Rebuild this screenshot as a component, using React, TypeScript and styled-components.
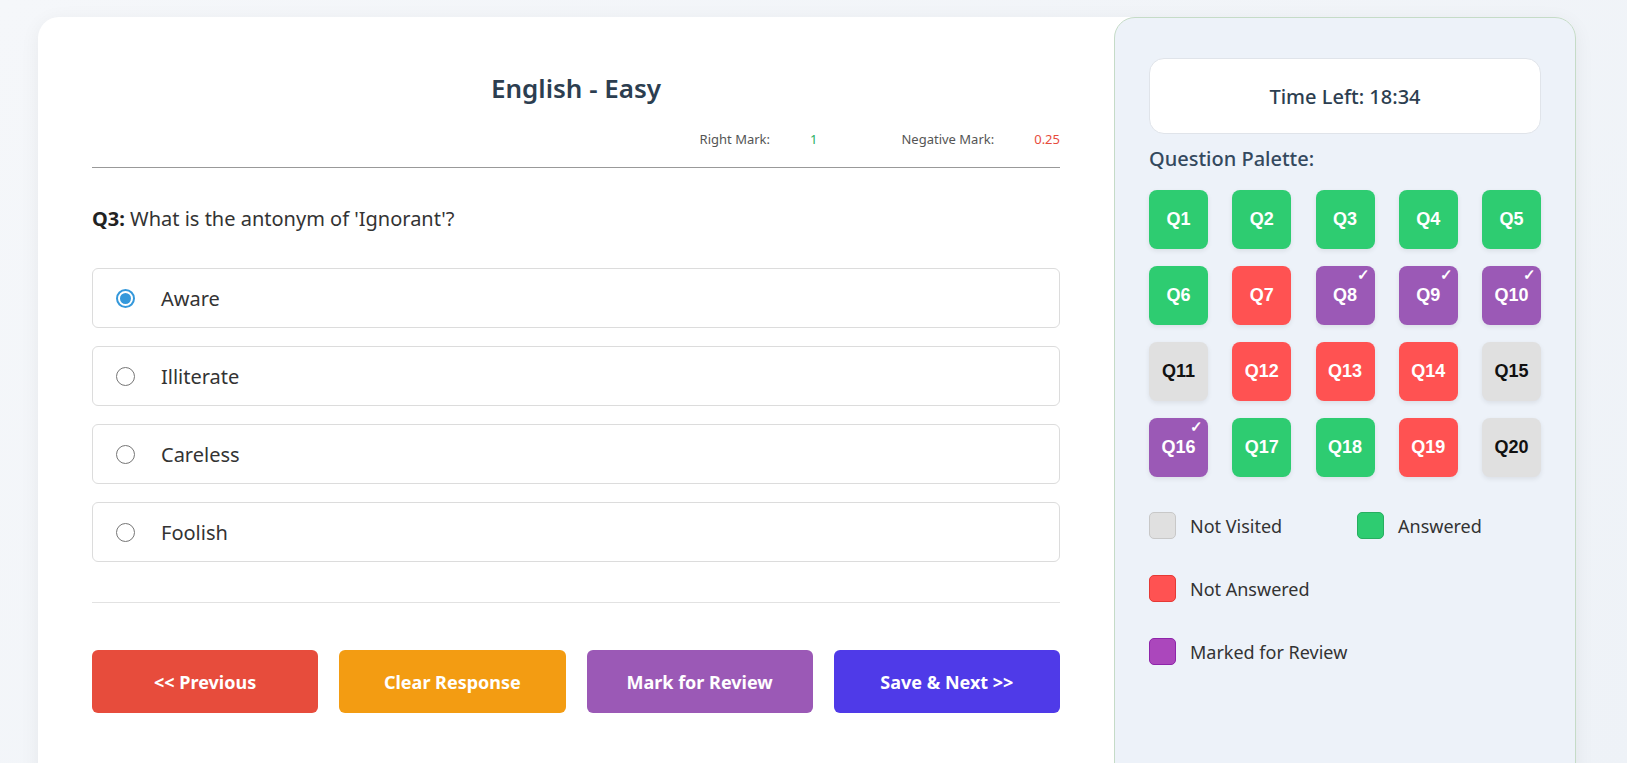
import React from "react";
import styled, { createGlobalStyle } from "styled-components";

const Global = createGlobalStyle`
  html, body { margin: 0; padding: 0; }
  body {
    background: linear-gradient(135deg, #f5f7fa 0%, #eef2f7 100%);
    font-family: "Noto Sans", "Open Sans", sans-serif;
    min-height: 763px;
  }
`;

const Page = styled.div`
  padding: 17px 0 0 38px;
`;

const Card = styled.div`
  display: flex;
  background: #fff;
  border-radius: 21px;
  box-shadow: 0 4px 20px rgba(0,0,0,0.06);
  height: 774px;
  width: 1538px;
  box-sizing: border-box;
`;

const Main = styled.div`
  flex: 1;
  padding: 50px 54px 0 54px;
  display: flex;
  flex-direction: column;
`;

const Title = styled.h2`
  margin: 0;
  text-align: center;
  font-size: 26px;
  font-weight: 600;
  color: #2c3e50;
  line-height: 42px;
`;

const Marks = styled.div`
  display: flex;
  justify-content: flex-end;
  font-size: 13px;
  color: #555;
  margin-top: 19px;
  height: 21px;
  align-items: center;
`;

const MarkLabel = styled.span`
  margin-left: 84px;
`;

const MarkValue = styled.span<{ $c: string }>`
  color: ${p => p.$c};
  margin-left: 40px;
`;

const Rule = styled.hr<{ $light?: boolean }>`
  border: none;
  border-top: ${p => (p.$light ? "1px solid #e2e2e2" : "1.5px solid #999")};
  margin: ${p => (p.$light ? "40px 0 0" : "18px 0 0")};
`;

const Question = styled.div`
  font-size: 20px;
  color: #333;
  margin-top: 35px;
  line-height: 31px;
  b { color: #222; }
`;

const Options = styled.div`
  display: flex;
  flex-direction: column;
  gap: 18px;
  margin-top: 34px;
`;

const Option = styled.label`
  display: flex;
  align-items: center;
  height: 60px;
  box-sizing: border-box;
  border: 1px solid #dcdcdc;
  border-radius: 6px;
  padding-left: 23px;
  font-size: 20px;
  color: #333;
`;

const Radio = styled.span<{ $on?: boolean }>`
  width: 19px;
  height: 19px;
  box-sizing: border-box;
  border-radius: 50%;
  border: ${p => (p.$on ? "2px solid #3498db" : "1.5px solid #767676")};
  margin-right: 26px;
  display: flex;
  align-items: center;
  justify-content: center;
  &::after {
    content: "";
    display: ${p => (p.$on ? "block" : "none")};
    width: 11px;
    height: 11px;
    border-radius: 50%;
    background: #3498db;
  }
`;

const Buttons = styled.div`
  display: grid;
  grid-template-columns: repeat(4, 1fr);
  gap: 21px;
  margin-top: 47px;
`;

const Btn = styled.button<{ $bg: string }>`
  height: 63px;
  border: none;
  border-radius: 6px;
  background: ${p => p.$bg};
  color: #fff;
  font-family: "Noto Sans", sans-serif;
  font-size: 18px;
  font-weight: 700;
`;

const Side = styled.div`
  width: 462px;
  box-sizing: border-box;
  background: #edf2f9;
  border: 1px solid #c5dbc7;
  border-radius: 21px;
  padding: 40px 34px 0 34px;
`;

const Timer = styled.div`
  background: #fff;
  border: 1px solid #e0e4ea;
  border-radius: 15px;
  height: 74px;
  display: flex;
  align-items: center;
  justify-content: center;
  font-size: 20px;
  font-weight: 500;
  color: #2c3e50;
`;

const PaletteTitle = styled.div`
  font-size: 20px;
  font-weight: 500;
  color: #34495e;
  margin-top: 9px;
  line-height: 32px;
`;

const Grid = styled.div`
  display: grid;
  grid-template-columns: repeat(5, 59px);
  justify-content: space-between;
  row-gap: 17px;
  margin-top: 15px;
`;

const colors: Record<string, [string, string]> = {
  a: ["#2ecc71", "#fff"],
  n: ["#ff5252", "#fff"],
  m: ["#9b59b6", "#fff"],
  v: ["#e0e0e0", "#111"],
};

const QBtn = styled.div<{ $s: string }>`
  position: relative;
  height: 59px;
  border-radius: 8px;
  background: ${p => colors[p.$s][0]};
  color: ${p => colors[p.$s][1]};
  font-family: "Liberation Sans", Arial, sans-serif;
  font-weight: 700;
  font-size: 18px;
  display: flex;
  align-items: center;
  justify-content: center;
  box-shadow: 0 2px 5px rgba(0,0,0,0.08);
`;

const Check = styled.span`
  position: absolute;
  top: 0px;
  right: 5px;
  font-size: 15px;
  color: #fff;
`;

const Legend = styled.div`
  display: grid;
  grid-template-columns: 208px 1fr;
  row-gap: 36px;
  margin-top: 35px;
`;

const LegendItem = styled.div<{ $full?: boolean }>`
  display: flex;
  align-items: center;
  gap: 14px;
  font-size: 18px;
  color: #333;
  grid-column: ${p => (p.$full ? "1 / -1" : "auto")};
`;

const Swatch = styled.span<{ $bg: string; $bd: string }>`
  width: 27px;
  height: 27px;
  box-sizing: border-box;
  border-radius: 5px;
  background: ${p => p.$bg};
  border: 1px solid ${p => p.$bd};
`;

const states = "a a a a a a n m m m v n n n v m a a n v".split(" ");

export default function App() {
  return (
    <>
      <Global />
      <Page>
        <Card>
          <Main>
            <Title>English - Easy</Title>
            <Marks>
              <span>Right Mark:</span>
              <MarkValue $c="#27ae60">1</MarkValue>
              <MarkLabel>Negative Mark:</MarkLabel>
              <MarkValue $c="#e74c3c">0.25</MarkValue>
            </Marks>
            <Rule />
            <Question><b>Q3:</b> What is the antonym of 'Ignorant'?</Question>
            <Options>
              {["Aware", "Illiterate", "Careless", "Foolish"].map((o, i) => (
                <Option key={o}><Radio $on={i === 0} />{o}</Option>
              ))}
            </Options>
            <Rule $light />
            <Buttons>
              <Btn $bg="#e74c3c">&lt;&lt; Previous</Btn>
              <Btn $bg="#f39c12">Clear Response</Btn>
              <Btn $bg="#9b59b6">Mark for Review</Btn>
              <Btn $bg="#4f3ae8">Save &amp; Next &gt;&gt;</Btn>
            </Buttons>
          </Main>
          <Side>
            <Timer>Time Left: 18:34</Timer>
            <PaletteTitle>Question Palette:</PaletteTitle>
            <Grid>
              {states.map((s, i) => (
                <QBtn key={i} $s={s}>
                  Q{i + 1}
                  {s === "m" && <Check>✓</Check>}
                </QBtn>
              ))}
            </Grid>
            <Legend>
              <LegendItem><Swatch $bg="#e0e0e0" $bd="#c8c8c8" />Not Visited</LegendItem>
              <LegendItem><Swatch $bg="#2ecc71" $bd="#27ae60" />Answered</LegendItem>
              <LegendItem $full><Swatch $bg="#ff5252" $bd="#e53935" />Not Answered</LegendItem>
              <LegendItem $full><Swatch $bg="#ab47bc" $bd="#8e24aa" />Marked for Review</LegendItem>
            </Legend>
          </Side>
        </Card>
      </Page>
    </>
  );
}
